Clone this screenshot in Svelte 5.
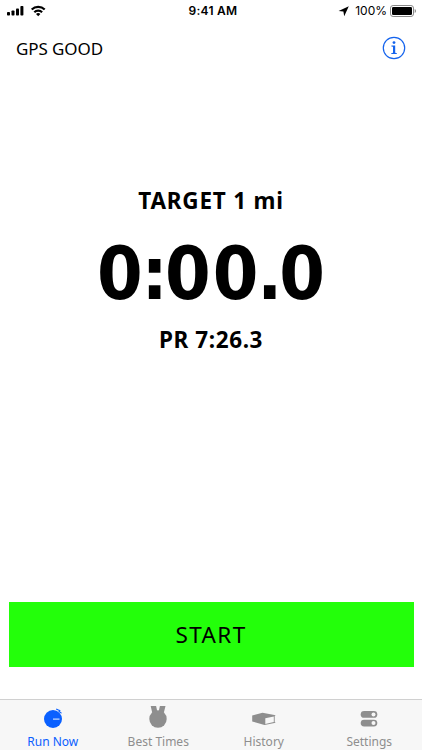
<script>
  let active = $state('Run Now');
  const tabs = ['Run Now', 'Best Times', 'History', 'Settings'];
</script>

<main class="screen">
  <header class="status">
    <div class="signal">
      <svg width="42" height="14" viewBox="0 0 42 14">
        <rect x="0" y="8" width="3" height="3.5" rx=".8" />
        <rect x="4.5" y="6.5" width="3" height="5" rx=".8" />
        <rect x="9" y="4.5" width="3" height="7" rx=".8" />
        <rect x="13.4" y="2" width="3" height="9.5" rx=".8" />
        <g fill="none" stroke="#000" stroke-width="2.2">
          <path d="M24.7 5.5a9.2 9.2 0 0 1 13 0" />
          <path d="M27.3 8.3a5.5 5.5 0 0 1 7.8 0" />
        </g>
        <path d="M31.2 12.3 29 10.1a3.1 3.1 0 0 1 4.4 0z" />
      </svg>
    </div>
    <time>9:41 AM</time>
    <div class="power">
      <svg width="11" height="11" viewBox="0 0 11 11"><path d="M10.8.2 6.2 10.3 5.4 5.5.6 5z" /></svg>
      <span>100%</span>
      <svg class="battery" width="27" height="12" viewBox="0 0 27 12">
        <rect x=".5" y=".5" width="23" height="11" rx="2.6" fill="none" stroke="#888" />
        <rect x="2" y="2" width="20" height="8" rx="1.3" />
        <path d="M24.7 4c1.8.7 1.8 3.3 0 4z" fill="#888" />
      </svg>
    </div>
  </header>

  <section class="top">
    <span class="gps">GPS GOOD</span>
    <button class="info" aria-label="Information">
      <svg width="24" height="24" viewBox="0 0 24 24" fill="#1463ed">
        <circle cx="12" cy="12" r="10.7" fill="none" stroke="#1463ed" stroke-width="1.2" />
        <circle cx="12" cy="6.6" r="1.4" />
        <path d="M9.4 9.6h3.8v7.2l1.700.4v.8H9.200v-.8l1.800-.4v-6l-1.600-.4z" />
      </svg>
    </button>
  </section>

  <section class="run">
    <div class="target">TARGET 1 mi</div>
    <div class="clock"><span class="lead">0</span><span class="mark">:</span><span class="pair">0</span><span class="lead">0</span><span class="mark">.</span><span>0</span></div>
    <div class="record">PR 7:26.3</div>
  </section>

  <button class="start">START</button>

  <nav>
    {#each tabs as tab}
      <button class="tab" class:active={active === tab} onclick={() => (active = tab)}>
        <svg width="28" height="24" viewBox="0 0 28 24" fill="currentColor">
          {#if tab === 'Run Now'}
            <circle cx="14" cy="14" r="9" />
            <path d="m17.200 4 4.200 2.100M20.800 5l-1 2M20.500 6.900l2 1.300" fill="none" stroke="currentColor" stroke-width="1.1" />
            <path d="M14 14.100h6.500" stroke="#dce8ff" stroke-width="1.1" />
          {:else if tab === 'Best Times'}
            <circle cx="14" cy="14" r="8.700" />
            <path d="M6.700 1h5.400l1.100 5h1.600l1.100-5h5.600l-2 8h-11z" />
          {:else if tab === 'History'}
            <path d="M2.200 10.400 12.500 7.700l13.200 2.600-1 .8v5.900l1 .7-11.200 2.200L2.200 16.600z" />
            <path d="m15.300 13.300 8.500-1.700V17l-8.500 1.900z" fill="#f7f7f7" />
          {:else}
            <rect x="5.700" y="6" width="16.600" height="6.800" rx="3.400" />
            <rect x="5.700" y="14.700" width="16.600" height="6.800" rx="3.400" />
            <circle cx="18.500" cy="9.400" r="2" fill="#f7f7f7" />
            <circle cx="18.500" cy="18.100" r="2" fill="#f7f7f7" />
          {/if}
        </svg>
        <span>{tab}</span>
      </button>
    {/each}
  </nav>
</main>

<style>
  :global(body) { margin: 0; }
  button { border: 0; padding: 0; margin: 0; background: none; font: inherit; color: inherit; }
  svg { display: block; flex: none; }
  .screen {
    width: 422px; height: 750px; overflow: hidden; box-sizing: border-box;
    display: flex; flex-direction: column; background: #fff; color: #000;
    font-family: "Noto Sans", sans-serif;
  }
  .status {
    height: 22px; flex: none; display: grid; grid-template-columns: 1fr auto 1fr;
    align-items: center; padding: 0 5px 0 7px; box-sizing: border-box;
    font: 12px/22px Inter, sans-serif;
  }
  time { font-weight: 600; letter-spacing: .25px; padding-left: 2px; }
  .power { display: flex; align-items: center; justify-content: flex-end; }
  .power span { margin: 0 3px 0 6px; }
  .top { height: 52px; flex: none; display: flex; justify-content: space-between; align-items: center; padding: 0 16px; }
  .gps { font-size: 17px; letter-spacing: -.1px; }
  .info { width: 24px; height: 24px; }
  .run { flex: 1; display: flex; flex-direction: column; align-items: center; padding-top: 112px; }
  .target, .record { font-weight: 700; font-size: 22.500px; line-height: 30px; white-space: nowrap; }
  .target { letter-spacing: .8px; }
  .record { letter-spacing: .6px; }
  .clock {
    font-family: "DejaVu Sans Condensed", "DejaVu Sans", sans-serif; font-stretch: condensed;
    font-weight: 700; font-size: 73px; line-height: 84px;
    margin: 16px 0 9px; white-space: nowrap;
  }
  .lead { letter-spacing: -1.200px; }
  .mark { letter-spacing: -2.800px; }
  .pair { letter-spacing: 2px; }
  .start {
    flex: none; width: 405px; height: 65px; margin: 0 auto 32px 8.500px; background: #23ff0a;
    font-size: 22.500px; line-height: 65px; letter-spacing: 1.400px;
  }
  nav { flex: none; height: 51px; box-sizing: border-box; border-top: 1px solid #d0d0d0; background: #f7f7f7; display: flex; }
  .tab {
    flex: 1; display: flex; flex-direction: column; align-items: center; padding-top: 5px;
    color: #8e8e8e; font-size: 12px; line-height: 16px; letter-spacing: 0;
  }
  .tab span { margin-top: 5px; }
  .tab.active { color: #0a60ff; }
</style>
